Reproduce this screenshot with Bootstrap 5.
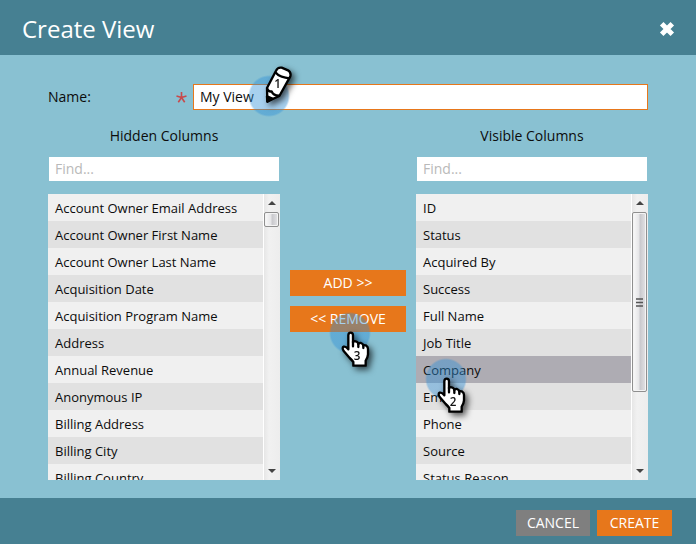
<!DOCTYPE html>
<html lang="en">
<head>
<meta charset="utf-8">
<meta name="viewport" content="width=device-width, initial-scale=1">
<title>Create View</title>
<link rel="stylesheet" href="https://cdn.jsdelivr.net/npm/bootstrap@5.3.0/dist/css/bootstrap.min.css">
<style>
body { font-family: "Open Sans", "Noto Sans", sans-serif; font-size: 14px; line-height: 20px; color: #0c0c0c; background: #89c1d2; }
.bar { background: #468092; color: #fff; }
.top-bar { padding: 4px 20px 4px 22px; min-height: 55px; }
.bottom-bar { padding: 12px 24px 8px; gap: 7px; min-height: 46px; }
.dialog-title { font-size: 24px; line-height: 32px; font-weight: 400; padding-top: 3px; }
.icon-btn { border: 0; background: none; padding: 2px 0 0; line-height: 0; }
.content-area { padding: 29px 48px 18px; }
.name-row { display: grid; grid-template-columns: 1fr 455px; margin-bottom: 12px; }
.name-label { padding-right: 6px; }
.text-field { height: 24px; border: 0; border-radius: 0; padding: 0 6px; font-size: 14px; line-height: 20px; color: #0c0c0c; }
.text-field::placeholder { color: #b9b9b9; opacity: 1; }
.name-field { height: 26px; border: 1px solid #e7771b; padding-bottom: 2px; }
.picker { display: grid; grid-template-columns: 1fr 116px 1fr; grid-template-rows: minmax(0, 1fr); column-gap: 10px; }
.picker-label { height: 27px; line-height: 28px; margin-bottom: 8px; }
.find-wrap { padding: 0 1px; margin-bottom: 13px; }
.find-wrap .text-field { padding-bottom: 2px; }
.rows { background: #f0f0f0; }
.rows li { height: 27px; }
.rows li:nth-child(even) { background: #e1e1e1; }
.rows li.chosen { background: #aeacb3; }
.rows button { border: 0; background: none; padding: 0 7px; font-size: 13px; line-height: 20px; color: #0c0c0c; }
.scroll-rail { width: 17px; padding: 0 1px; background: linear-gradient(90deg, #fff 0 1px, #e6e6e6 1px, #f1f1f1 6px, #ededed); }
.arrow { height: 18px; line-height: 0; }
.thumb { border: 1px solid #8f8f8f; border-radius: 2px; background: linear-gradient(90deg, #fafafa, #e6e6e8 45%, #c9c9cd 55%, #e4e4e6); box-shadow: inset 0 0 0 1px #f4f4f4; height: 15px; }
.thumb.long { height: 72%; }
.middle { gap: 10px; }
.act { border: 0; border-radius: 0; height: 26px; padding: 0 11px; font-size: 14px; line-height: 26px; color: #fff; background: #e7771b; }
.act:hover { color: #fff; background: #d66a12; }
.act.plain { background: #7f7f7f; }
.act.go { padding: 0 12px; min-width: 75px; }
.step { position: absolute; z-index: 3; width: 60px; height: 60px; pointer-events: none; background: radial-gradient(circle at 22px 22px, rgba(45,143,216,.42) 19px, rgba(45,143,216,0) 21px); }
.step svg { display: block; width: 60px; height: 60px; overflow: visible; filter: drop-shadow(3px 3px 3px rgba(0,0,0,.65)); }
.step-1 { left: 54px; top: -10px; }
.step-2 { left: 8px; top: 1px; }
.step-3 { left: 38px; top: 5px; }
.step text { font-family: "Open Sans", sans-serif; font-size: 35px; font-weight: 600; fill: #111; }
</style>
<script defer src="https://cdn.jsdelivr.net/npm/bootstrap@5.3.0/dist/js/bootstrap.bundle.min.js"></script>
</head>
<body>
<svg class="d-none" aria-hidden="true">
  <symbol id="hand" viewBox="0 0 180 180" overflow="visible">
    <g stroke="#000" stroke-width="7" stroke-linejoin="round" stroke-linecap="round">
      <path fill="#fff" d="M61 112V73Q61 65 68 65T75 73V94Q76 90 83 91Q90 92 91 99Q93 95 99 96Q105 98 106 104Q109 101 115 104Q120 107 120 114V130Q119 141 113 149V164H76V153Q72 147 65 141L47 120Q41 110 47 107Q53 105 61 115Z"/>
      <path fill="none" d="M75 92V106M91 98V108M106 104V111"/>
    </g>
  </symbol>
  <symbol id="up" viewBox="0 0 8 4"><path d="M4 0 8 4H0Z" fill="#444"/></symbol>
  <symbol id="down" viewBox="0 0 8 4"><path d="M0 0H8L4 4Z" fill="#444"/></symbol>
</svg>
<div class="d-flex flex-column vh-100">
  <header class="bar top-bar d-flex justify-content-between align-items-center">
    <h1 class="dialog-title m-0">Create View</h1>
    <button type="button" class="icon-btn" aria-label="Close">
      <svg width="18" height="18" viewBox="0 0 18 18"><path d="M3.700 3.700 14.300 14.300M14.300 3.700 3.700 14.300" stroke="#fff" stroke-width="5"/></svg>
    </button>
  </header>

  <main class="content-area d-flex flex-column flex-fill overflow-hidden">
    <div class="name-row">
      <label for="view-name" class="name-label d-flex justify-content-between align-items-center">Name:
        <svg width="11" height="11" viewBox="0 0 11 11" role="img" aria-label="required"><path d="M5.5 5.5V0M5.5 5.5 .5 4M5.5 5.5 10.5 4M5.5 5.5 2.3 10.3M5.5 5.5 8.7 10.3" stroke="#c8494b" stroke-width="1.6" fill="none"/></svg>
      </label>
      <div class="position-relative">
        <input id="view-name" type="text" class="text-field name-field w-100 d-block" value="My View">
        <span class="step step-1" aria-hidden="true"><svg viewBox="0 0 180 180">
          <g stroke="#000" stroke-width="7" stroke-linejoin="round">
            <path fill="#fff" d="M61 82 60 42 87-10Q92-21 104-19L123-11Q133-5 130 7L97 66Z"/>
            <path fill="none" d="M85-5Q93 5 104 8T127 13M60 44Q66 55 74 52Q78 64 96 65"/>
            <path d="M61 83 60 67 76 74Z"/>
          </g>
          <text x="82" y="42">1</text>
        </svg></span>
      </div>
    </div>

    <div class="picker flex-fill overflow-hidden">
      <section class="d-flex flex-column overflow-hidden">
        <label for="find-hidden" class="picker-label text-center">Hidden Columns</label>
        <div class="find-wrap"><input id="find-hidden" type="text" class="text-field w-100 d-block" placeholder="Find..."></div>
        <div class="rows d-flex flex-fill overflow-hidden">
          <ul class="list-unstyled m-0 flex-fill">
            <li><button type="button" class="w-100 h-100 text-start">Account Owner Email Address</button></li>
            <li><button type="button" class="w-100 h-100 text-start">Account Owner First Name</button></li>
            <li><button type="button" class="w-100 h-100 text-start">Account Owner Last Name</button></li>
            <li><button type="button" class="w-100 h-100 text-start">Acquisition Date</button></li>
            <li><button type="button" class="w-100 h-100 text-start">Acquisition Program Name</button></li>
            <li><button type="button" class="w-100 h-100 text-start">Address</button></li>
            <li><button type="button" class="w-100 h-100 text-start">Annual Revenue</button></li>
            <li><button type="button" class="w-100 h-100 text-start">Anonymous IP</button></li>
            <li><button type="button" class="w-100 h-100 text-start">Billing Address</button></li>
            <li><button type="button" class="w-100 h-100 text-start">Billing City</button></li>
            <li><button type="button" class="w-100 h-100 text-start">Billing Country</button></li>
          </ul>
          <div class="scroll-rail d-flex flex-column" aria-hidden="true">
            <div class="arrow d-flex align-items-center justify-content-center"><svg width="8" height="4"><use href="#up"/></svg></div>
            <div class="flex-fill"><div class="thumb"></div></div>
            <div class="arrow d-flex align-items-center justify-content-center"><svg width="8" height="4"><use href="#down"/></svg></div>
          </div>
        </div>
      </section>

      <div class="middle d-flex flex-column justify-content-center">
        <button type="button" class="btn act w-100">ADD &gt;&gt;</button>
        <div class="position-relative">
          <button type="button" class="btn act w-100 d-block">&lt;&lt; REMOVE</button>
          <span class="step step-3" aria-hidden="true"><svg viewBox="0 0 180 180"><use href="#hand" width="180" height="180"/><text x="77" y="148">3</text></svg></span>
        </div>
      </div>

      <section class="d-flex flex-column overflow-hidden">
        <label for="find-visible" class="picker-label text-center">Visible Columns</label>
        <div class="find-wrap"><input id="find-visible" type="text" class="text-field w-100 d-block" placeholder="Find..."></div>
        <div class="rows d-flex flex-fill overflow-hidden">
          <ul class="list-unstyled m-0 flex-fill">
            <li><button type="button" class="w-100 h-100 text-start">ID</button></li>
            <li><button type="button" class="w-100 h-100 text-start">Status</button></li>
            <li><button type="button" class="w-100 h-100 text-start">Acquired By</button></li>
            <li><button type="button" class="w-100 h-100 text-start">Success</button></li>
            <li><button type="button" class="w-100 h-100 text-start">Full Name</button></li>
            <li><button type="button" class="w-100 h-100 text-start">Job Title</button></li>
            <li class="chosen position-relative"><button type="button" class="w-100 h-100 text-start" aria-pressed="true">Company</button>
              <span class="step step-2" aria-hidden="true"><svg viewBox="0 0 180 180"><use href="#hand" width="180" height="180"/><text x="77" y="148">2</text></svg></span></li>
            <li><button type="button" class="w-100 h-100 text-start">Email</button></li>
            <li><button type="button" class="w-100 h-100 text-start">Phone</button></li>
            <li><button type="button" class="w-100 h-100 text-start">Source</button></li>
            <li><button type="button" class="w-100 h-100 text-start">Status Reason</button></li>
          </ul>
          <div class="scroll-rail d-flex flex-column" aria-hidden="true">
            <div class="arrow d-flex align-items-center justify-content-center"><svg width="8" height="4"><use href="#up"/></svg></div>
            <div class="flex-fill d-flex flex-column"><div class="thumb long d-flex align-items-center justify-content-center"><svg width="7" height="9" viewBox="0 0 7 9"><path d="M0 1H7M0 4.500H7M0 8H7" stroke="#555" stroke-width="1.500"/></svg></div></div>
            <div class="arrow d-flex align-items-center justify-content-center"><svg width="8" height="4"><use href="#down"/></svg></div>
          </div>
        </div>
      </section>
    </div>
  </main>

  <footer class="bar bottom-bar d-flex justify-content-end align-items-start">
    <button type="button" class="btn act plain">CANCEL</button>
    <button type="button" class="btn act go">CREATE</button>
  </footer>
</div>
</body>
</html>
